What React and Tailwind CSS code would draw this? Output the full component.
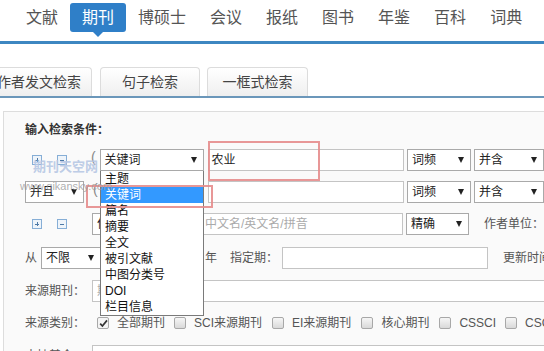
import React from 'react'

const nav = ['文献', '期刊', '博硕士', '会议', '报纸', '图书', '年鉴', '百科', '词典']
const options = ['主题', '关键词', '篇名', '摘要', '全文', '被引文献', '中图分类号', 'DOI', '栏目信息']

function Arrow() {
  return (
    <svg className="absolute right-[6px] top-[7px]" width="6" height="6" viewBox="0 0 6 6">
      <path d="M0 0h6L3 6z" fill="#222" />
    </svg>
  )
}

function Select({ className, children }) {
  return (
    <div className={`relative h-full shrink-0 bg-white border border-[#a9a9a9] pl-[4px] text-[12px] leading-[20px] text-[#222] ${className}`}>
      {children}
      <Arrow />
    </div>
  )
}

function Box({ minus }) {
  return (
    <div className="relative w-[10px] h-[10px] shrink-0 border border-[#86aed6] bg-[#eef4fa]">
      <span className="absolute left-[2px] top-[3.5px] w-[4px] h-px bg-[#4d79a6]" />
      {!minus && <span className="absolute left-[3.5px] top-[2px] w-px h-[4px] bg-[#4d79a6]" />}
    </div>
  )
}

function Check({ checked, label, className }) {
  return (
    <div className={`flex items-center shrink-0 ${className}`}>
      <div className={`relative w-[12px] h-[12px] rounded-[2px] border border-[#a8a8a8] ${checked ? 'bg-[#f4f4f4]' : 'bg-gradient-to-b from-[#f6f6f6] to-[#d9d9d9]'}`}>
        {checked && (
          <svg className="absolute left-[1px] top-[1px]" width="9" height="9" viewBox="0 0 9 9">
            <path d="M1.2 4.6l2.2 2.4L8 1.4" fill="none" stroke="#333" strokeWidth="1.7" />
          </svg>
        )}
      </div>
      <span className="ml-[8px] text-[12px] text-[#555]">{label}</span>
    </div>
  )
}

export default function App() {
  return (
    <div className="relative w-[544px] h-[351px] overflow-hidden bg-white font-['Liberation_Sans','Noto_Sans_CJK_SC',sans-serif]">
      {/* top navigation */}
      <div className="flex h-[41px] pl-[14px] pt-[3px]">
        {nav.map(n => n === '期刊' ? (
          <div key={n} className="relative h-[29px] px-3 rounded-[3px] bg-[#2f7fc8] text-white text-[16px] leading-[29px]">
            {n}
            <span className="absolute left-1/2 -translate-x-1/2 top-full border-x-[5px] border-x-transparent border-t-[5px] border-t-[#2f7fc8]" />
          </div>
        ) : (
          <div key={n} className="h-[29px] px-3 text-[16px] leading-[29px] text-[#555]">{n}</div>
        ))}
      </div>
      <div className="h-[3px] bg-[#3d87c1]" />

      {/* search type tabs */}
      <div className="flex items-end h-[29px] mt-[23px] -ml-[14px]">
        <div className="w-[106px] h-full rounded-t-[4px] border border-b-0 border-[#dcdcdc] bg-gradient-to-b from-white to-[#efefef] text-center text-[14px] leading-[29px] text-[#444]">作者发文检索</div>
        <div className="ml-[8px] w-[100px] h-full rounded-t-[4px] border border-b-0 border-[#dcdcdc] bg-gradient-to-b from-white to-[#efefef] text-center text-[14px] leading-[29px] text-[#444]">句子检索</div>
        <div className="ml-[7px] w-[101px] h-full rounded-t-[4px] border border-b-0 border-[#dcdcdc] bg-gradient-to-b from-white to-[#efefef] text-center text-[14px] leading-[29px] text-[#444]">一框式检索</div>
      </div>
      <div className="h-[2px] bg-[#6b97ba]" />

      {/* search panel */}
      <div className="mt-[13px] ml-[3px] h-[260px] border-l border-t border-[#dddddd] bg-[#fafafa] pl-[21px]">
        <div className="pt-[11px] text-[12px] leading-[14px] font-bold text-[#333]">输入检索条件：</div>

        {/* row 1 */}
        <div className="flex items-center h-[22px] mt-[12px]">
          <div className="ml-[7px]"><Box /></div>
          <div className="ml-[15px]"><Box minus /></div>
          <span className="ml-[24px] w-[9px] self-start -mt-[2px] text-[14px] text-[#888]">(</span>
          <Select className="w-[104px]">关键词</Select>
          <div className="ml-[4px] w-[206px] h-full bg-white border border-[#c4c4c4] pl-[3px] text-[12px] leading-[20px] text-[#222]">农业</div>
          <Select className="ml-[3px] w-[64px]">词频</Select>
          <Select className="ml-[3px] w-[70px]">并含</Select>
        </div>

        {/* row 2 */}
        <div className="flex items-center h-[22px] mt-[10px]">
          <Select className="w-[59px]">并且</Select>
          <span className="ml-[7px] w-[9px] pl-[2px] self-start -mt-[2px] text-[14px] text-[#888]">(</span>
          <Select className="w-[104px]">关键词</Select>
          <div className="ml-[4px] w-[206px] h-full bg-white border border-[#c4c4c4]" />
          <Select className="ml-[3px] w-[64px]">词频</Select>
          <Select className="ml-[3px] w-[70px]">并含</Select>
        </div>

        {/* row 3 */}
        <div className="flex items-center h-[22px] mt-[10px]">
          <div className="ml-[7px]"><Box /></div>
          <div className="ml-[15px]"><Box minus /></div>
          <Select className="ml-[25px] w-[106px]">作者</Select>
          <div className="ml-[3px] w-[205px] h-full bg-white border border-[#c4c4c4] pl-[3px] text-[12px] leading-[20px] text-[#aaa]">中文名/英文名/拼音</div>
          <Select className="ml-[3px] w-[63px]">精确</Select>
          <span className="ml-[15px] shrink-0 text-[12px] text-[#555]">作者单位：</span>
        </div>

        {/* row 4 */}
        <div className="flex items-center h-[22px] mt-[12px]">
          <span className="w-[12px] shrink-0 text-[12px] text-[#555]">从</span>
          <Select className="ml-[4px] w-[60px]">不限</Select>
          <Select className="ml-[3px] w-[95px]">不限</Select>
          <span className="ml-[6px] shrink-0 text-[12px] text-[#555]">年</span>
          <span className="ml-[13px] shrink-0 text-[12px] text-[#555]">指定期：</span>
          <div className="ml-[4px] w-[206px] h-full shrink-0 bg-white border border-[#c4c4c4]" />
          <span className="ml-[15px] shrink-0 text-[12px] text-[#555]">更新时间：</span>
        </div>

        {/* row 5 */}
        <div className="flex items-center h-[22px] mt-[11px]">
          <span className="w-[60px] shrink-0 text-[12px] text-[#555]">来源期刊：</span>
          <div className="ml-[7px] w-[470px] h-full shrink-0 bg-white border border-[#c4c4c4] pl-[4px] text-[12px] leading-[20px] text-[#aaa]">期刊名称/ISSN/CN</div>
        </div>

        {/* row 6 */}
        <div className="flex items-center h-[22px] mt-[10px]">
          <span className="w-[72px] shrink-0 text-[12px] text-[#555]">来源类别：</span>
          <Check checked label="全部期刊" />
          <Check label="SCI来源期刊" className="ml-[9px]" />
          <Check label="EI来源期刊" className="ml-[10px]" />
          <Check label="核心期刊" className="ml-[10px]" />
          <Check label="CSSCI" className="ml-[10px]" />
          <Check label="CSCD" className="ml-[9px]" />
        </div>

        {/* row 7 */}
        <div className="flex items-start h-[22px] mt-[11px]">
          <span className="w-[67px] shrink-0 mt-[2px] text-[12px] text-[#555]">支持基金：</span>
          <div className="w-[470px] h-full shrink-0 bg-white border border-[#c4c4c4]" />
        </div>
      </div>

      {/* open dropdown list */}
      <div className="absolute left-[100px] top-[171px] w-[104px] bg-white border border-t-0 border-[#7a7a7a]">
        {options.map(o => (
          <div key={o} className={`h-[16px] pl-[4px] text-[12px] leading-[16px] ${o === '关键词' ? 'bg-[#3399ff] text-white' : 'text-[#111]'}`}>{o}</div>
        ))}
      </div>

      {/* highlight boxes */}
      <div className="absolute left-[208px] top-[141px] w-[112px] h-[40px] border-2 border-[#e58c8c]/90" />
      <div className="absolute left-[86px] top-[185px] w-[127px] h-[23px] border-2 border-[#e58c8c]/90" />

      {/* watermark */}
      <div className="absolute left-[33px] top-[159px] text-[13px] leading-[16px] font-bold text-[#b6c7e4]/90">期刊天空网</div>
      <div className="absolute left-[20px] top-[180px] text-[11px] leading-[12px] text-[#9a9a9a]/80 font-['Liberation_Sans',sans-serif]">www.qikansky.com</div>
    </div>
  )
}
